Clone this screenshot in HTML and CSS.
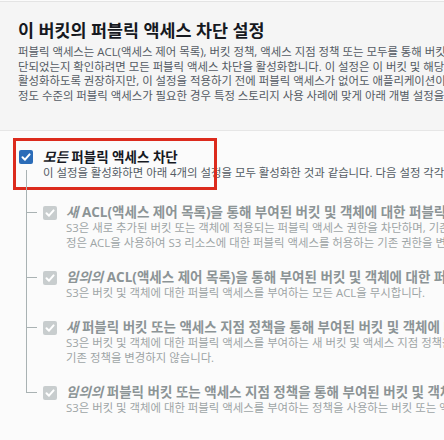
FILE: index.html
```html
<!DOCTYPE html>
<html lang="ko">
  <head>
    <meta charset="UTF-8" />
    <meta name="viewport" content="width=device-width, initial-scale=1.0" />
    <title>퍼블릭 액세스 차단 설정</title>
    <link rel="stylesheet" href="styles.css">
  </head>
  <body>
    <section class="intro">
      <h2 class="intro-title">이 버킷의 퍼블릭 액세스 차단 설정</h2>
      <p class="intro-text">
        퍼블릭 액세스는 ACL(액세스 제어 목록), 버킷 정책, 액세스 지점 정책 또는 모두를 통해 버킷 및 객체에 부여됩니다. 이 버킷 및 해당 객체에 대한 퍼블릭 액세스가 차<br>
        단되었는지 확인하려면 모든 퍼블릭 액세스 차단을 활성화합니다. 이 설정은 이 버킷 및 해당 액세스 지점에만 적용됩니다. AWS에서는 모든 퍼블릭 액세스 차단을<br>
        활성화하도록 권장하지만, 이 설정을 적용하기 전에 퍼블릭 액세스가 없어도 애플리케이션이 올바르게 작동하는지 확인합니다. 이 버킷 또는 내부 객체에 대한 어느<br>
        정도 수준의 퍼블릭 액세스가 필요한 경우 특정 스토리지 사용 사례에 맞게 아래 개별 설정을 사용자 지정할 수 있습니다.
      </p>
    </section>

    <section class="settings">
      <div class="highlight"></div>

      <div class="option option-main">
        <span class="check check-on">
          <svg viewBox="0 0 14 14" width="14" height="14"><polyline points="3.5,7.2 6,9.7 10.6,4.4" /></svg>
        </span>
        <div>
          <div class="option-label"><em>모든</em> 퍼블릭 액세스 차단</div>
          <div class="option-desc">이 설정을 활성화하면 아래 4개의 설정을 모두 활성화한 것과 같습니다. 다음 설정 각각은 서로 독립적입니다.</div>
        </div>
      </div>

      <ul class="tree">
        <li class="option child">
          <span class="check check-off">
            <svg viewBox="0 0 14 14" width="14" height="14"><polyline points="3.5,7.2 6,9.7 10.6,4.4" /></svg>
          </span>
          <div>
            <div class="option-label"><em>새</em> ACL(액세스 제어 목록)을 통해 부여된 버킷 및 객체에 대한 퍼블릭 액세스 차단</div>
            <div class="option-desc">
              S3은 새로 추가된 버킷 또는 객체에 적용되는 퍼블릭 액세스 권한을 차단하며, 기존 버킷 및 객체에 대한 새 퍼블릭 액세스 ACL이 생성되지 않도록 합니다. 이 설<br>
              정은 ACL을 사용하여 S3 리소스에 대한 퍼블릭 액세스를 허용하는 기존 권한을 변경하지 않습니다.
            </div>
          </div>
        </li>
        <li class="option child">
          <span class="check check-off">
            <svg viewBox="0 0 14 14" width="14" height="14"><polyline points="3.5,7.2 6,9.7 10.6,4.4" /></svg>
          </span>
          <div>
            <div class="option-label"><em>임의의</em> ACL(액세스 제어 목록)을 통해 부여된 버킷 및 객체에 대한 퍼블릭 액세스 차단</div>
            <div class="option-desc">S3은 버킷 및 객체에 대한 퍼블릭 액세스를 부여하는 모든 ACL을 무시합니다.</div>
          </div>
        </li>
        <li class="option child">
          <span class="check check-off">
            <svg viewBox="0 0 14 14" width="14" height="14"><polyline points="3.5,7.2 6,9.7 10.6,4.4" /></svg>
          </span>
          <div>
            <div class="option-label"><em>새</em> 퍼블릭 버킷 또는 액세스 지점 정책을 통해 부여된 버킷 및 객체에 대한 퍼블릭 액세스 차단</div>
            <div class="option-desc">
              S3은 버킷 및 객체에 대한 퍼블릭 액세스를 부여하는 새 버킷 및 액세스 지점 정책을 차단합니다. 이 설정은 S3 리소스에 대한 퍼블릭 액세스를 허용하는<br>
              기존 정책을 변경하지 않습니다.
            </div>
          </div>
        </li>
        <li class="option child">
          <span class="check check-off">
            <svg viewBox="0 0 14 14" width="14" height="14"><polyline points="3.5,7.2 6,9.7 10.6,4.4" /></svg>
          </span>
          <div>
            <div class="option-label"><em>임의의</em> 퍼블릭 버킷 또는 액세스 지점 정책을 통해 부여된 버킷 및 객체에 대한 퍼블릭 및 교차 계정 액세스 차단</div>
            <div class="option-desc">S3은 버킷 및 객체에 대한 퍼블릭 액세스를 부여하는 정책을 사용하는 버킷 또는 액세스 지점에 대한 퍼블릭 및 교차 계정 액세스를 무시합니다.</div>
          </div>
        </li>
      </ul>
    </section>
  </body>
</html>
```

FILE: styles.css
```css
body {
  margin: 0;
  font-family: "Open Sans", "Noto Sans CJK KR", sans-serif;
  background-color: #fbfbfb;
  white-space: nowrap;
  overflow: hidden;
}

.intro {
  margin-top: 1px;
  padding: 18px 18px 27px;
  background-color: #f5f5f5;
  border-top: 1px solid #e4e4e4;
  border-bottom: 1px solid #e6e6e6;
}

.intro-title {
  margin: 0 0 5px;
  font-size: 17.4px;
  line-height: 20px;
  font-weight: 700;
  color: #16191f;
}

.intro-text {
  margin: 0;
  font-size: 11.4px;
  line-height: 14.5px;
  color: #545b64;
}

.settings {
  position: relative;
  padding: 18px 0 30px 19px;
}

/* red annotation frame drawn over the first option */
.highlight {
  position: absolute;
  left: 13px;
  top: 7px;
  width: 204px;
  height: 52px;
  box-sizing: border-box;
  border: 3px solid #dc2b1d;
}

.option {
  display: flex;
  align-items: flex-start;
}

.option-main {
  gap: 10px;
}

.option-label {
  font-size: 13.5px;
  line-height: 16px;
  font-weight: 700;
  color: #16191f;
}

.option-label em {
  font-style: italic;
}

.option-desc {
  font-size: 11.4px;
  line-height: 15px;
  color: #545b64;
}

.check {
  flex: none;
  width: 14px;
  height: 14px;
  margin-top: 1px;
  border-radius: 2px;
}

.check svg {
  display: block;
  fill: none;
  stroke: #fff;
  stroke-width: 2;
  stroke-linecap: round;
  stroke-linejoin: round;
}

.check-on {
  background-color: #2b6cb8;
}

.check-off {
  background-color: #c8cdce;
  margin-top: 2px;
}

.tree {
  list-style: none;
  margin: 5px 0 0 7px;
  padding: 0;
}

.child {
  position: relative;
  gap: 9px;
  padding: 19px 0 0 17px;
}

.child .option-label {
  color: #8c9496;
}

.child .option-desc {
  color: #9ea5a6;
}

.child::before {
  content: "";
  position: absolute;
  left: 0;
  top: 0;
  bottom: 0;
  border-left: 1px solid #a9b2b3;
}

.child:first-child::before {
  top: -15px;
}

.child:last-child::before {
  bottom: auto;
  height: 27px;
}

.child::after {
  content: "";
  position: absolute;
  left: 0;
  top: 27px;
  width: 11px;
  border-top: 1px solid #a9b2b3;
}
```
